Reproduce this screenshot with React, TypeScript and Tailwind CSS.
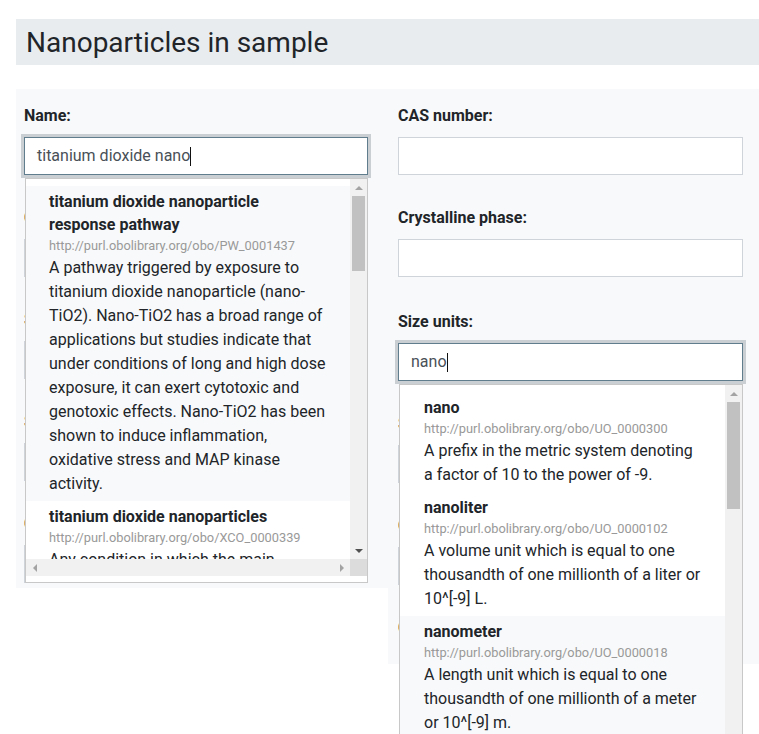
import React from "react";

type Item = { title: string; url: string; desc: string; active?: boolean };

const leftItems: Item[] = [
  {
    title: "titanium dioxide nanoparticle response pathway",
    url: "http://purl.obolibrary.org/obo/PW_0001437",
    desc: "A pathway triggered by exposure to titanium dioxide nanoparticle (nano-TiO2). Nano-TiO2 has a broad range of applications but studies indicate that under conditions of long and high dose exposure, it can exert cytotoxic and genotoxic effects. Nano-TiO2 has been shown to induce inflammation, oxidative stress and MAP kinase activity.",
    active: true,
  },
  {
    title: "titanium dioxide nanoparticles",
    url: "http://purl.obolibrary.org/obo/XCO_0000339",
    desc: "Any condition in which the main influencing factor is exposure to titanium dioxide nanoparticles.",
  },
];

const rightItems: Item[] = [
  {
    title: "nano",
    url: "http://purl.obolibrary.org/obo/UO_0000300",
    desc: "A prefix in the metric system denoting a factor of 10 to the power of -9.",
  },
  {
    title: "nanoliter",
    url: "http://purl.obolibrary.org/obo/UO_0000102",
    desc: "A volume unit which is equal to one thousandth of one millionth of a liter or 10^[-9] L.",
  },
  {
    title: "nanometer",
    url: "http://purl.obolibrary.org/obo/UO_0000018",
    desc: "A length unit which is equal to one thousandth of one millionth of a meter or 10^[-9] m.",
    active: true,
  },
  {
    title: "nanomolar",
    url: "http://purl.obolibrary.org/obo/UO_0000065",
    desc: "A unit of molarity which is equal to one thousandth of one millionth of a molar.",
  },
];

function Arrow({ dir, dark }: { dir: "up" | "down" | "left" | "right"; dark?: boolean }) {
  const fill = dark ? "#505050" : "#a3a3a3";
  const pts =
    dir === "up"
      ? "0,4 8,4 4,0"
      : dir === "down"
      ? "0,0 8,0 4,4"
      : dir === "left"
      ? "4,0 4,8 0,4"
      : "0,0 0,8 4,4";
  const w = dir === "up" || dir === "down" ? 8 : 4;
  const h = dir === "up" || dir === "down" ? 4 : 8;
  return (
    <svg width={w} height={h} viewBox={`0 0 ${w} ${h}`}>
      <polygon points={pts} fill={fill} />
    </svg>
  );
}

function Dropdown({
  items,
  thumbHeight,
  padL,
  padR,
  hScroll,
}: {
  items: Item[];
  thumbHeight: number;
  padL: string;
  padR: string;
  hScroll: boolean;
}) {
  return (
    <div className="absolute left-[1px] right-0 top-[calc(100%+3px)] z-10 h-[405px] border border-[#c8c8c8] bg-white pb-[6px] flex flex-col">
      <div className="flex-1 min-h-0 flex flex-col">
        <div className="flex flex-1 min-h-0">
          <div className="flex-1 min-w-0 overflow-hidden pt-[7px]">
            {items.map((it, i) => (
              <div
                key={i}
                className={`${padL} ${padR} pt-1 pb-[5px] ${it.active ? "bg-[#f8f9fa]" : "bg-white"}`}
              >
                <div className="font-bold text-[16px] leading-[23px] text-[#212529]">{it.title}</div>
                <div className="text-[12.8px] leading-[20px] text-[#999999]">{it.url}</div>
                <div className="text-[16px] leading-[24px] text-[#212529]">{it.desc}</div>
              </div>
            ))}
          </div>
          <div className="w-[17px] bg-[#f1f1f1] flex flex-col shrink-0">
            <div className="h-[17px] flex items-center justify-center">
              <Arrow dir="up" />
            </div>
            <div className="flex-1 relative">
              <div
                className="absolute left-[2px] right-[2px] top-0 bg-[#c1c1c1]"
                style={{ height: thumbHeight }}
              />
            </div>
            <div className="h-[17px] flex items-center justify-center">
              <Arrow dir="down" dark />
            </div>
          </div>
        </div>
        {hScroll && (
          <div className="flex h-[17px] shrink-0">
            <div className="flex-1 bg-[#f1f1f1] flex items-center justify-between">
              <div className="w-[17px] flex items-center justify-center">
                <Arrow dir="left" />
              </div>
              <div className="w-[17px] flex items-center justify-center">
                <Arrow dir="right" />
              </div>
            </div>
            <div className="w-[17px] bg-[#dcdcdc]" />
          </div>
        )}
      </div>
    </div>
  );
}

function Label({ children, className = "" }: { children: React.ReactNode; className?: string }) {
  return (
    <div className={`text-[16px] font-bold leading-[22px] h-[22px] mb-[10px] text-[#212529] ${className}`}>
      {children}
    </div>
  );
}

function PlainInput() {
  return <div className="h-[38px] border border-[#ced4da] bg-white" />;
}

function FocusInput({ value, children }: { value: string; children?: React.ReactNode }) {
  return (
    <div className="relative">
      <div className="h-[38px] border border-[#5f7d8c] bg-white shadow-[0_0_0_3px_#c9cfd3] flex items-center pl-3 text-[16px] text-[#495057]">
        <span className="whitespace-pre">{value}</span>
        <span className="inline-block w-px h-[19px] bg-[#111]" />
      </div>
      {children}
    </div>
  );
}

export default function App() {
  return (
    <div className="min-h-screen bg-white font-['Roboto',sans-serif] text-[#212529] overflow-hidden">
      <div className="pt-[19px] pl-4">
        <h2 className="bg-[#e9ecef] h-[46px] pl-[10px] text-[28px] leading-[47px] font-normal">
          Nanoparticles in sample
        </h2>
      </div>
      <div className="mt-6 ml-4 grid grid-cols-[372px_371px] items-start">
        {/* Left column */}
        <div className="bg-[#f8f9fa] h-[499px] pl-2 pr-5 pt-4">
          <Label>Name:</Label>
          <FocusInput value="titanium dioxide nano">
            <Dropdown items={leftItems} thumbHeight={75} padL="pl-[23px]" padR="pr-[22px]" hScroll />
          </FocusInput>
          <Label className="mt-8">Chemical formula:</Label>
          <PlainInput />
          <Label className="mt-8">Size:</Label>
          <PlainInput />
          <Label className="mt-8">Shape:</Label>
          <PlainInput />
          <Label className="mt-8">Coating:</Label>
          <PlainInput />
        </div>
        {/* Right column */}
        <div className="bg-[#f8f9fa] h-[575px] pl-[10px] pr-4 pt-4">
          <Label>CAS number:</Label>
          <PlainInput />
          <Label className="mt-8">Crystalline phase:</Label>
          <PlainInput />
          <Label className="mt-[34px]">Size units:</Label>
          <FocusInput value="nano">
            <Dropdown items={rightItems} thumbHeight={107} padL="pl-6" padR="pr-6" hScroll={false} />
          </FocusInput>
          <Label className="mt-8">Surface area:</Label>
          <PlainInput />
          <Label className="mt-8">Concentration:</Label>
          <PlainInput />
          <Label className="mt-8">Comment:</Label>
        </div>
      </div>
    </div>
  );
}
